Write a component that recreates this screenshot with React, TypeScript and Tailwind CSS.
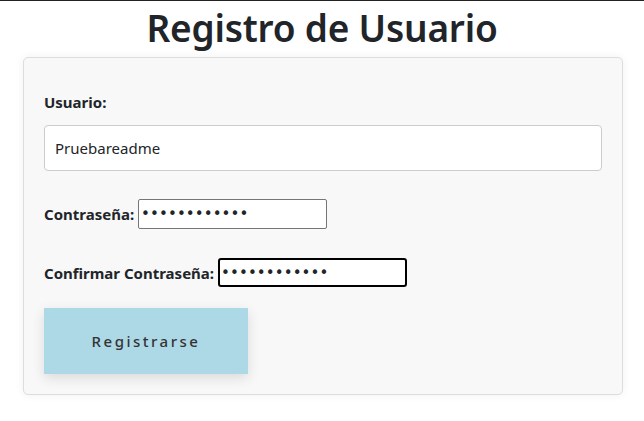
export default function App() {
  return (
    <div className="min-h-[421px] border-t border-[#222] bg-white font-['Noto_Sans',sans-serif] text-[#212529]">
      <h1 className="pt-[2px] text-center text-[37px] font-semibold leading-[50px] tracking-[-0.2px] text-[#212529]">
        Registro de Usuario
      </h1>
      <form className="ml-[23px] mt-[4px] w-[600px] rounded-[5px] border border-[#ddd] bg-[#f8f8f8] px-[20px] pt-[34px] pb-[20px] shadow-[0_0_10px_rgba(0,0,0,0.06)]">
        <div>
          <label className="mb-[13px] block text-[15px] font-bold leading-[20px]">Usuario:</label>
          <input
            type="text"
            defaultValue="Pruebareadme"
            className="block h-[46px] w-full rounded-[4px] border border-[#ccc] bg-white px-[10px] text-[15px] text-[#212529] outline-none"
          />
        </div>
        <div className="mt-[28px] flex items-center">
          <label className="mr-[4px] text-[15px] font-bold leading-[20px]">Contraseña:</label>
          <input
            type="password"
            defaultValue="contraseña12"
            className="h-[30px] w-[189px] rounded-[2px] border border-[#767676] bg-white px-[2px] font-['DejaVu_Sans',sans-serif] text-[15px] tracking-[0.1px] outline-none"
          />
        </div>
        <div className="mt-[29px] flex items-center">
          <label className="mr-[4px] text-[15px] font-bold leading-[20px]">Confirmar Contraseña:</label>
          <input
            type="password"
            defaultValue="contraseña12"
            className="h-[29px] w-[189px] rounded-[3px] border-2 border-[#000] bg-white px-[1px] font-['DejaVu_Sans',sans-serif] text-[15px] tracking-[0.1px] outline-none"
          />
        </div>
        <button
          type="button"
          className="mt-[21px] h-[66px] w-[204px] bg-[#add8e6] text-[15px] font-medium tracking-[2.5px] text-[#333] shadow-[0_4px_12px_rgba(0,0,0,0.12)]"
        >
          Registrarse
        </button>
      </form>
    </div>
  );
}
